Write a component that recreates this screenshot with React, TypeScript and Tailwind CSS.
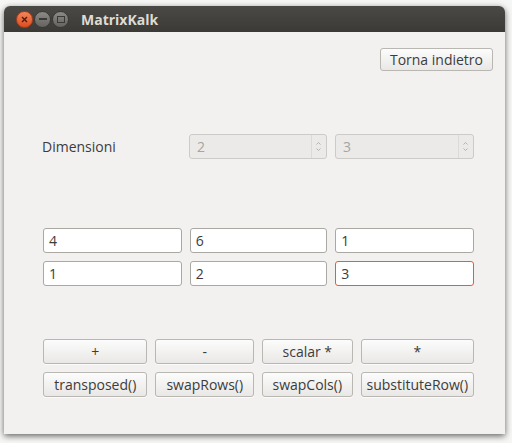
const font = { fontFamily: '"Open Sans", "Noto Sans", sans-serif' };

function Btn({ label, w }: { label: string; w: string }) {
  return (
    <button
      className={`${w} h-[25px] rounded-[3px] border border-[#b9b7b2] bg-gradient-to-b from-[#fcfcfc] to-[#e9e8e6] text-[14px] leading-none text-[#3c3c3c] shadow-[0_1px_0_rgba(255,255,255,0.7)]`}
    >
      {label}
    </button>
  );
}

function Field({ value, w, focus }: { value: string; w: string; focus?: boolean }) {
  return (
    <div
      className={`${w} h-[25px] rounded-[3px] border bg-white pl-[5px] flex items-center text-[14px] text-[#3c3c3c] ${
        focus ? 'border-[#e0612f]' : 'border-[#aaa8a3]'
      }`}
    >
      {value}
    </div>
  );
}

function Spin({ value, w }: { value: string; w: string }) {
  return (
    <div
      className={`${w} h-[25px] rounded-[3px] border border-[#cdcbc7] bg-[#ebeae8] flex items-center text-[14px] text-[#a6a5a2]`}
    >
      <span className="flex-1 pl-[7px]">{value}</span>
      <div className="h-full w-[14px] border-l border-[#dcdad6] flex flex-col items-center justify-center gap-[3px] mr-[1px]">
        <svg width="5" height="3" viewBox="0 0 5 3">
          <path d="M0.5 2.5 L2.5 0.5 L4.5 2.5" fill="none" stroke="#b5b3af" strokeWidth="1" />
        </svg>
        <svg width="5" height="3" viewBox="0 0 5 3">
          <path d="M0.5 0.5 L2.5 2.5 L4.5 0.5" fill="none" stroke="#b5b3af" strokeWidth="1" />
        </svg>
      </div>
    </div>
  );
}

export default function App() {
  return (
    <div className="w-[512px] h-[443px] bg-[#f6f6f5] pt-[6px] pl-[4px]" style={font}>
      <div className="w-[501px] h-[428px] rounded-t-[6px] overflow-hidden flex flex-col shadow-[0_2px_6px_rgba(0,0,0,0.6)]">
        <div className="h-[26px] bg-gradient-to-b from-[#4a4945] to-[#3b3a36] flex items-center pl-[12px]">
          <div className="w-[17px] h-[17px] rounded-full bg-gradient-to-b from-[#f5845a] to-[#dc4c1d] border border-[#a8401c] flex items-center justify-center">
            <svg width="7" height="7" viewBox="0 0 7 7">
              <path d="M1 1 L6 6 M6 1 L1 6" stroke="#4a1a08" strokeWidth="1.3" />
            </svg>
          </div>
          <div className="ml-[1px] w-[17px] h-[17px] rounded-full bg-gradient-to-b from-[#8b8a86] to-[#64635f] border border-[#3a3935] flex items-center justify-center">
            <div className="w-[8px] h-[2px] bg-[#3a3935]" />
          </div>
          <div className="ml-[1px] w-[17px] h-[17px] rounded-full bg-gradient-to-b from-[#8b8a86] to-[#64635f] border border-[#3a3935] flex items-center justify-center">
            <div className="w-[8px] h-[7px] border-[1.5px] border-[#3a3935]" />
          </div>
          <span className="ml-[12px] text-[14px] font-bold text-[#dfdbd2]">MatrixKalk</span>
        </div>
        <div className="flex-1 bg-[#f2f1f0] pl-[39px] pr-[31px] flex flex-col">
          <div className="flex justify-end mt-[16px] -mr-[19px]">
            <button className="h-[23px] px-[9px] rounded-[3px] border border-[#b9b7b2] bg-gradient-to-b from-[#fcfcfc] to-[#e9e8e6] text-[14px] leading-none text-[#3c3c3c]">
              Torna indietro
            </button>
          </div>
          <div className="flex items-center mt-[63px]">
            <span className="w-[147px] text-[14px] text-[#3c3c3c] -ml-[1px] pl-0">Dimensioni</span>
            <Spin value="2" w="w-[138px]" />
            <div className="w-[8px]" />
            <Spin value="3" w="w-[139px]" />
          </div>
          <div className="mt-[69px] flex flex-col gap-[8px]">
            <div className="flex gap-[8px]">
              <Field value="4" w="w-[139px]" />
              <Field value="6" w="w-[138px]" />
              <Field value="1" w="w-[139px]" />
            </div>
            <div className="flex gap-[8px]">
              <Field value="1" w="w-[139px]" />
              <Field value="2" w="w-[138px]" />
              <Field value="3" w="w-[139px]" focus />
            </div>
          </div>
          <div className="mt-[53px] flex flex-col gap-[8px]">
            <div className="flex gap-[8px]">
              <Btn label="+" w="w-[105px]" />
              <Btn label="-" w="w-[99px]" />
              <Btn label="scalar *" w="w-[91px]" />
              <Btn label="*" w="w-[114px]" />
            </div>
            <div className="flex gap-[8px]">
              <Btn label="transposed()" w="w-[105px]" />
              <Btn label="swapRows()" w="w-[99px]" />
              <Btn label="swapCols()" w="w-[91px]" />
              <Btn label="substituteRow()" w="w-[114px]" />
            </div>
          </div>
        </div>
      </div>
    </div>
  );
}
